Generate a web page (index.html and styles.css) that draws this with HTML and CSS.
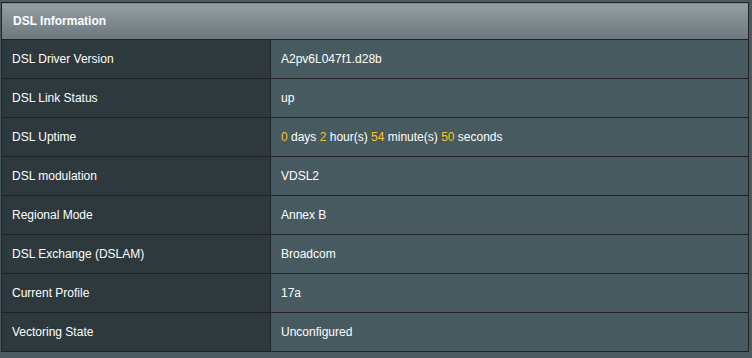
FILE: index.html
```html
<!DOCTYPE html>
<html>
<head>
<meta charset="utf-8">
<link rel="stylesheet" href="styles.css">
</head>
<body>
<table class="info-table">
  <thead>
    <tr><th colspan="2">DSL Information</th></tr>
  </thead>
  <tbody>
    <tr><td class="label">DSL Driver Version</td><td class="value">A2pv6L047f1.d28b</td></tr>
    <tr><td class="label">DSL Link Status</td><td class="value">up</td></tr>
    <tr><td class="label">DSL Uptime</td><td class="value"><span class="num">0</span> days <span class="num">2</span> hour(s) <span class="num">54</span> minute(s) <span class="num">50</span> seconds</td></tr>
    <tr><td class="label">DSL modulation</td><td class="value">VDSL2</td></tr>
    <tr><td class="label">Regional Mode</td><td class="value">Annex B</td></tr>
    <tr><td class="label">DSL Exchange (DSLAM)</td><td class="value">Broadcom</td></tr>
    <tr><td class="label">Current Profile</td><td class="value">17a</td></tr>
    <tr><td class="label">Vectoring State</td><td class="value">Unconfigured</td></tr>
  </tbody>
</table>
</body>
</html>
```
FILE: styles.css
```css
html, body {
  margin: 0;
  padding: 0;
  background: #4d5b60;
}

body {
  padding: 2px 0 0 1px;
  font-family: "Liberation Sans", Arial, sans-serif;
  font-size: 12px;
  color: #ffffff;
}

.info-table {
  width: 748px;
  border-collapse: collapse;
  border: 1px solid #222;
}

.info-table th {
  height: 36px;
  padding: 0 0 0 11px;
  text-align: left;
  font-weight: bold;
  background: linear-gradient(to bottom, #939fa4 0%, #6b777c 100%);
  border-bottom: 1px solid #222;
}

.info-table td {
  height: 38px;
  padding: 0;
  border-bottom: 1px solid #222;
}

.info-table td.label {
  width: 258px;
  padding-left: 10px;
  background: #2e393d;
  border-right: 1px solid #222;
}

.info-table td.value {
  padding-left: 10px;
  background: #475a60;
}

.num {
  color: #fcc425;
}
```
